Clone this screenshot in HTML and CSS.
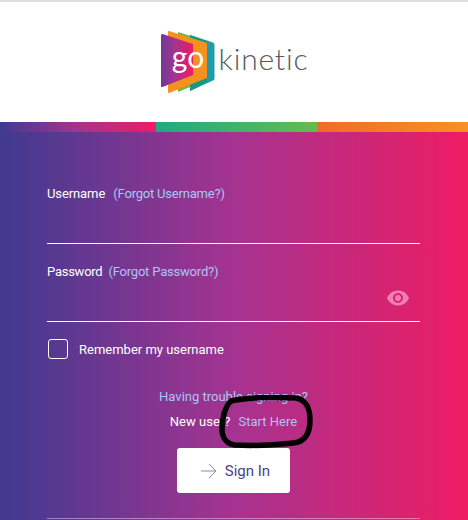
FILE: index.html
```html
<!DOCTYPE html>
<html lang="en">
<head>
<meta charset="utf-8">
<title>Go Kinetic</title>
<link rel="stylesheet" href="styles.css">
</head>
<body>
<header class="brand">
  <svg class="logo-mark" viewBox="0 0 56 64" width="56" height="64" aria-hidden="true">
    <defs>
      <linearGradient id="markFill" x1="0" y1="0" x2="1" y2="0">
        <stop offset="0" stop-color="#6f3a96"/>
        <stop offset="0.450" stop-color="#a8328f"/>
        <stop offset="1" stop-color="#ec1c65"/>
      </linearGradient>
    </defs>
    <path d="M30 5 L53 12.500 Q54.500 13 54.500 15 L54.500 48 Q54.500 50 53 50.500 L30 61 Z" fill="#1f9cab"/>
    <path d="M18 2 L47 11 L47 50 L18 62 Z" fill="#72b744"/>
    <path d="M30 5 L47 11 L47 52 L30 61 Z" fill="#149a80"/>
    <path d="M9 1 L47 13 L47 48 L9 63 Q8 63 8 62 L8 2 Q8 1 9 1 Z" fill="#f6901e"/>
    <path d="M2.500 4 L33 14 L33 45 L2.500 57 Q1 57.500 1 56 L1 5.500 Q1 3.500 2.500 4 Z" fill="url(#markFill)"/>
    <text class="logo-go" x="28" y="38" text-anchor="middle">go</text>
  </svg>
  <span class="logo-word">kinetic</span>
</header>
<main class="panel">
  <div class="stripe">
    <span class="stripe-a"></span>
    <span class="stripe-b"></span>
    <span class="stripe-c"></span>
  </div>
  <form class="form">
    <div class="field field-user">
      <p class="label">Username <a class="link link-user" href="#">(Forgot Username?)</a></p>
    </div>
    <div class="field field-pass">
      <p class="label label-pass">Password <a class="link" href="#">(Forgot Password?)</a></p>
      <svg class="eye" viewBox="0 0 24 24" width="24" height="24" aria-hidden="true">
        <path fill-rule="evenodd" d="M12 4.500C7 4.500 2.700 7.600 1 12c1.700 4.400 6 7.500 11 7.500s9.300-3.100 11-7.500c-1.700-4.400-6-7.500-11-7.500zM12 17a5 5 0 1 1 0-10 5 5 0 0 1 0 10zm0-8a3 3 0 1 0 0 6 3 3 0 0 0 0-6z"/>
      </svg>
    </div>
    <label class="remember"><span class="box"></span><span class="remember-text">Remember my username</span></label>
    <div class="help">
      <a class="trouble" href="#">Having trouble signing in?</a>
      <p class="new-user">New user? <a class="start" href="#">Start Here</a>
        <svg class="scribble" viewBox="0 0 100 58" width="100" height="58" aria-hidden="true">
          <path d="M14 6 C30 2 62 2 78 3 C89 4 93 14 93 25 C93 38 88 47 76 48 C56 50 34 51 18 50 C9 49 5 42 5 34 C5 24 8 11 14 6 Z" fill="none" stroke="#000" stroke-width="5.500"/>
        </svg>
      </p>
    </div>
    <button class="signin" type="button">
      <svg viewBox="0 0 16 16" width="16" height="16" aria-hidden="true"><path d="M0 8h15M8 1l7 7-7 7" fill="none" stroke="#8d88a8" stroke-width="1"/></svg>
      Sign In
    </button>
    <div class="rule"></div>
  </form>
</main>
</body>
</html>
```
FILE: styles.css
```css
* { box-sizing: border-box; }
html, body { margin: 0; height: 100%; }
body {
  font-family: "Roboto", "Liberation Sans", sans-serif;
  background: #fff;
  overflow: hidden;
  height: 520px;
  display: flex;
  flex-direction: column;
}
.brand {
  height: 122px;
  border-top: 2px solid #dedede;
  display: flex;
  align-items: center;
  justify-content: center;
  gap: 3px;
}
.logo-go { font: 400 30px "Lato", sans-serif; fill: #fff; }
.logo-word {
  font: 300 30px "Lato", sans-serif;
  letter-spacing: 0.8px;
  color: #58595b;
  margin-bottom: 8px;
}
.panel {
  flex: 1;
  background: linear-gradient(90deg, #403a90 0%, #a53390 50%, #ee1c63 100%);
}
.stripe { display: grid; grid-template-columns: 156px 161px 1fr; height: 10px; }
.stripe-a { background: linear-gradient(90deg, #403a90, #a53390 50%, #ee1c63); }
.stripe-b { background: linear-gradient(90deg, #1fa984, #66bb4f); }
.stripe-c { background: linear-gradient(90deg, #f26a2a, #f6921e); }
.form {
  display: flex;
  flex-direction: column;
  padding: 0 48px 0 47px;
  color: #fff;
  font-size: 13px;
  line-height: 18px;
}
.label { margin: 0; letter-spacing: -0.1px; }
.label-pass { letter-spacing: -0.25px; }
.link { color: #a9c6f5; text-decoration: none; margin-left: 3px; letter-spacing: -0.2px; }
.link-user { margin-left: 5px; }
.field { border-bottom: 1px solid #fff; position: relative; }
.field-user { height: 112px; padding-top: 53px; }
.field-pass { height: 78px; padding-top: 19px; }
.eye { position: absolute; right: 10px; top: 42px; fill: #f27fb2; }
.remember { display: flex; align-items: center; gap: 11px; margin: 17px 0 0 1px; }
.remember-text { margin-top: 2px; }
.box { width: 20px; height: 20px; border: 1px solid #fff; border-radius: 3px; }
.help {
  display: flex;
  flex-direction: column;
  align-items: center;
  margin-top: 29px;
  gap: 7px;
}
.trouble { color: #a9c6f5; text-decoration: none; }
.new-user { margin: 0; position: relative; }
.start { color: #a9c6f5; text-decoration: none; margin-left: 5px; }
.scribble { position: absolute; left: 47px; top: -18px; }
.signin {
  align-self: center;
  width: 113px;
  height: 45px;
  margin-top: 17px;
  padding-left: 10px;
  border: 0;
  border-radius: 3px;
  background: #fff;
  color: #4a3f83;
  font: 15px "Roboto", sans-serif;
  display: flex;
  align-items: center;
  justify-content: center;
  gap: 8px;
}
.rule { height: 1px; background: rgba(255, 255, 255, 0.4); margin-top: 25px; }
```
